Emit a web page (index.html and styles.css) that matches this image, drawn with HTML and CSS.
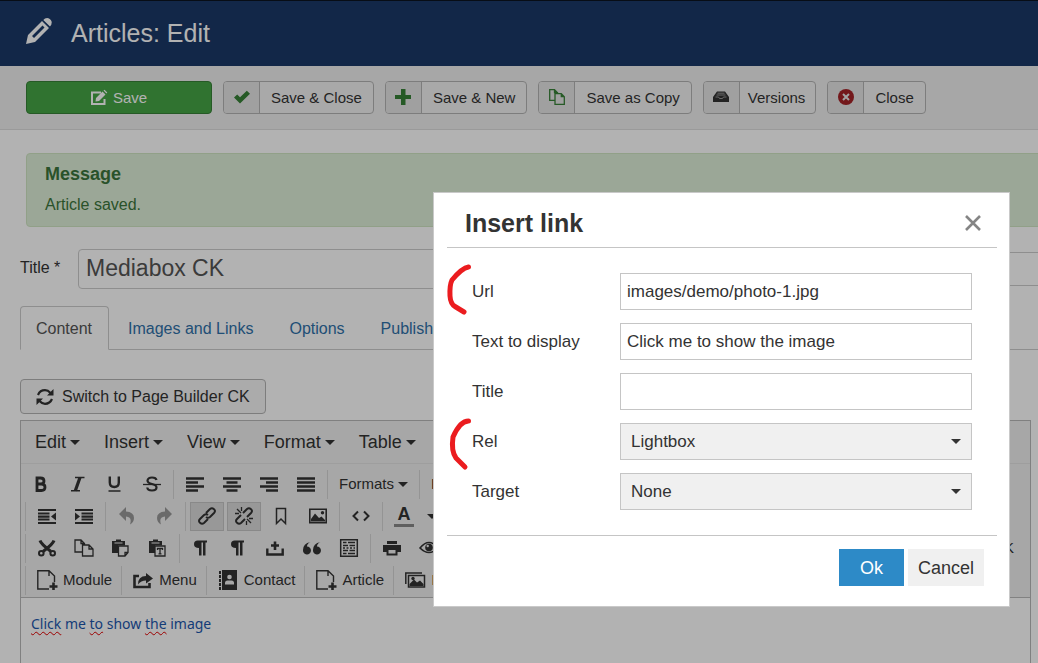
FILE: index.html
```html
<!DOCTYPE html>
<html lang="en">
<head>
<meta charset="utf-8">
<title>Articles: Edit</title>
<link rel="stylesheet" href="styles.css">
</head>
<body>
<div class="page">
  <header class="header">
    <svg class="header-icon" viewBox="0 0 26 26"><path fill="#fff" fill-rule="evenodd" d="M0 26 2 17 16 3 23 10 9 24ZM6 18 8 20 18.500 9.500 16.500 7.500ZM17.300 2 19 .5Q21.500-.8 23.800 1L25 2.300Q26.800 4.500 25.300 6.800L24 8.500Z"/></svg>
    <h1>Articles: Edit</h1>
  </header>

  <div class="actions">
    <button class="save"><svg class="i16" viewBox="0 0 16 16"><path fill="none" stroke="#fff" stroke-width="2" d="M10 2.500H1V14H13.500V9"/><path fill="#fff" d="M4.500 11.500 5 8 11.500 1.500 14.500 4.500 8 11ZM12.500.6 13.500-.3 16.300 2.500 15.400 3.500Z"/></svg>Save</button>
    <button class="action"><span class="action-icon"><svg class="i16" viewBox="0 0 16 16"><path fill="#378137" d="M0 8.500 3.200 5.500 6 8.200 12.800 1.800 16 4.700 6 14.500Z"/></svg></span><span class="action-text">Save &amp; Close</span></button>
    <button class="action"><span class="action-icon"><svg class="i16" viewBox="0 0 16 16"><path fill="#378137" d="M6 0H10.500V6H16V10H10.500V16H6V10H0V6H6Z"/></svg></span><span class="action-text">Save &amp; New</span></button>
    <button class="action"><span class="action-icon"><svg class="i16" viewBox="0 0 16 16"><path fill="none" stroke="#378137" stroke-width="1.300" d="M6 11.300H.7V.7H5.500L8.500 3.700M5.500.7V3.700H8.500V4.700H6V15.300H15.300V7.700L12.300 4.700H6M12.300 4.700V7.700H15.300"/></svg></span><span class="action-text">Save as Copy</span></button>
    <button class="action compact"><span class="action-icon"><svg class="i16" viewBox="0 0 16 16"><path fill="#333" d="M4 2.500H12L16 8V13H0V8Z"/><path stroke="#999" fill="none" d="M4.500 4.200H11.500M3.500 6H12.500M2.500 8H5.500L6.500 9.500H9.500L10.500 8H13.500"/></svg></span><span class="action-text">Versions</span></button>
    <button class="action"><span class="action-icon"><svg class="i16" viewBox="0 0 16 16"><circle cx="8" cy="8" r="8" fill="#a52328"/><path stroke="#e8e8e8" stroke-width="2" d="M5 5 11 11M11 5 5 11"/></svg></span><span class="action-text">Close</span></button>
  </div>

  <main class="content">
    <section class="alert">
      <h2>Message</h2>
      <p>Article saved.</p>
    </section>

    <div class="title-row">
      <label for="title">Title *</label>
      <input id="title" class="title-input" value="Mediabox CK">
      <input class="alias-input" aria-label="Alias">
    </div>

    <nav class="tabs">
      <a class="tab active" href="#content">Content</a>
      <a class="tab" href="#images">Images and Links</a>
      <a class="tab" href="#options">Options</a>
      <a class="tab" href="#publishing">Publishing</a>
    </nav>

    <button class="switch"><svg class="i18" viewBox="0 0 18 18"><path fill="none" stroke="#333" stroke-width="2.200" d="M2 7Q4 2.200 9 2.200 12 2.200 14.500 5M16 11Q14 15.800 9 15.800 6 15.800 3.500 13"/><path fill="#333" d="M17.500 1V7.500H11ZM.5 17V10.500H7Z"/></svg>Switch to Page Builder CK</button>

    <div class="editor">
      <div class="menubar">
        <button>Edit</button><button>Insert</button><button>View</button><button>Format</button><button>Table</button>
      </div>
      <div class="tools">
        <div class="row">
          <button class="tool" aria-label="Bold"><svg viewBox="0 0 20 20"><path fill="none" stroke="#333" stroke-width="2.800" d="M6 4H9.500Q13 4 13 7T9.500 10H6M6 10H10.500Q14 10 14 13.200T10.500 16.500H6V2.600"/></svg></button>
          <button class="tool" aria-label="Italic"><svg viewBox="0 0 20 20"><path fill="none" stroke="#333" stroke-width="1.600" d="M7 3.500H16.500M3 16.800H12"/><path stroke="#333" stroke-width="3.200" d="M12 3.500 7.300 16.800"/></svg></button>
          <button class="tool" aria-label="Underline"><svg viewBox="0 0 20 20"><path fill="none" stroke="#333" stroke-width="2.400" d="M4.800 2.500V8.500Q4.800 13 9.300 13T13.800 8.500V2.500"/><path stroke="#333" stroke-width="1.500" d="M3.500 17H15.500"/></svg></button>
          <button class="tool" aria-label="Strikethrough"><svg viewBox="0 0 20 20"><path fill="none" stroke="#333" stroke-width="2.200" d="M14.500 6Q14 3.500 10 3.500T5.500 6.500Q5.500 9 10 10T14.500 13.500Q14.500 16.500 10 16.500T5.300 13.500"/><path stroke="#333" stroke-width="1.300" d="M1 10.500H19"/></svg></button>
          <i class="sep"></i>
          <button class="tool" aria-label="Align left"><svg viewBox="0 0 20 20"><path stroke="#333" stroke-width="2.500" d="M1 4.500H19M1 8.500H13M1 12.500H19M1 16.500H13"/></svg></button>
          <button class="tool" aria-label="Align center"><svg viewBox="0 0 20 20"><path stroke="#333" stroke-width="2.500" d="M1 4.500H19M4.500 8.500H15.500M1 12.500H19M4.500 16.500H15.500"/></svg></button>
          <button class="tool" aria-label="Align right"><svg viewBox="0 0 20 20"><path stroke="#333" stroke-width="2.500" d="M1 4.500H19M7 8.500H19M1 12.500H19M7 16.500H19"/></svg></button>
          <button class="tool" aria-label="Justify"><svg viewBox="0 0 20 20"><path stroke="#333" stroke-width="2.500" d="M1 4.500H19M1 8.500H19M1 12.500H19M1 16.500H19"/></svg></button>
          <i class="sep"></i>
          <button class="drop">Formats</button>
          <i class="sep"></i>
          <button class="drop">Font</button>
        </div>
        <div class="row">
          <i class="sep"></i>
          <button class="tool" aria-label="Decrease indent"><svg viewBox="0 0 20 20"><path stroke="#333" stroke-width="2.200" d="M1 4H19M1 7.500H12.500M1 10.700H12.500M1 13.500H12.500M1 17H19"/><path fill="#333" d="M19 6.500V14.500L14 10.500Z"/></svg></button>
          <button class="tool" aria-label="Increase indent"><svg viewBox="0 0 20 20"><path stroke="#333" stroke-width="2.200" d="M1 4H19M7.500 7.500H19M7.500 10.700H19M7.500 13.500H19M1 17H19"/><path fill="#333" d="M1 6.500V14.500L6 10.500Z"/></svg></button>
          <i class="sep"></i>
          <button class="tool" aria-label="Undo"><svg viewBox="0 0 20 20"><path fill="#999" d="M9 1V5.500Q17 6 17 12 17 16 13 18.500 15.500 11 9 10.500V15L2 8Z"/></svg></button>
          <button class="tool" aria-label="Redo"><svg viewBox="0 0 20 20"><path fill="#999" d="M11 1V5.500Q3 6 3 12 3 16 7 18.500 4.500 11 11 10.500V15L18 8Z"/></svg></button>
          <i class="sep"></i>
          <button class="tool on" aria-label="Insert link"><svg viewBox="0 0 20 20"><g fill="none" stroke="#333" stroke-width="2"><path d="M9 7 13 3Q15 1.500 17 3.200T17 7L13 11Q11 12.500 9 11M11 13 7 17Q5 18.500 3 16.800T3 13L7 9Q9 7.500 11 9"/></g></svg></button>
          <button class="tool on" aria-label="Remove link"><svg viewBox="0 0 20 20"><g fill="none" stroke="#333" stroke-width="2"><path d="M9 7 13 3Q15 1.500 17 3.200T17 7L13 11M11 13 7 17Q5 18.500 3 16.800T3 13L7 9"/></g><path stroke="#333" stroke-width="1.300" d="M3 3 7 7M7.500 1V5M1 7.500H5M17 17 13 13M12.500 19V15M19 12.500H15"/></svg></button>
          <button class="tool" aria-label="Anchor"><svg viewBox="0 0 20 20"><path fill="none" stroke="#333" stroke-width="1.500" d="M5.500 2.500H14.500V17.500L10 13 5.500 17.500Z"/></svg></button>
          <button class="tool" aria-label="Image"><svg viewBox="0 0 20 20"><path fill="none" stroke="#333" stroke-width="1.600" d="M1.800 3.300H18.200V16.700H1.800Z"/><path fill="#333" d="M3 15V13L7 7.500 11 12 13.500 10.500 17 14V15.500H3Z"/><circle cx="14.500" cy="6.700" r="1.700" fill="#333"/></svg></button>
          <i class="sep"></i>
          <button class="tool" aria-label="Source code"><svg viewBox="0 0 20 20"><path fill="none" stroke="#333" stroke-width="2" d="M7 5.500 2.500 10 7 14.500M13 5.500 17.500 10 13 14.500"/></svg></button>
          <i class="sep"></i>
          <button class="color-tool"><span>A</span></button>
        </div>
        <div class="row">
          <i class="sep"></i>
          <button class="tool" aria-label="Cut"><svg viewBox="0 0 20 20"><g fill="none" stroke="#333"><path stroke-width="3" d="M3 2.500Q4 6 14 13.500M17 2.500Q16 6 6 13.500"/><circle cx="4.300" cy="15.300" r="2.300" stroke-width="2"/><circle cx="15.700" cy="15.300" r="2.300" stroke-width="2"/></g></svg></button>
          <button class="tool" aria-label="Copy"><svg viewBox="0 0 20 20"><path fill="none" stroke="#333" stroke-width="1.300" d="M8 14H1V2H7L10.500 5.500V7M7 2V5.500H10.500M8.500 7H15L19 11V18H8.500ZM15 7V11H19"/></svg></button>
          <button class="tool" aria-label="Paste"><svg viewBox="0 0 20 20"><path fill="#333" d="M1 3H5V1.500H10V3H14V7.500H7V15H1Z"/><path stroke="#f0f0f0" d="M3.500 5H11.500"/><path fill="#f0f0f0" stroke="#333" stroke-width="1.300" d="M7.500 8H17V14.500L14 18H7.500ZM17 14.500H14V18"/></svg></button>
          <button class="tool" aria-label="Paste as text"><svg viewBox="0 0 20 20"><path fill="#333" d="M1 3H5V1.500H10V3H14V7.500H7V15H1Z"/><path stroke="#f0f0f0" d="M3.500 5H11.500"/><path fill="#f0f0f0" stroke="#333" stroke-width="1.300" d="M7 8H17V18H7Z"/><path fill="none" stroke="#333" stroke-width="1.300" d="M9.500 12V10.500H14.500V12M12 10.500V15.800M10.500 15.800H13.500"/></svg></button>
          <i class="sep"></i>
          <button class="tool" aria-label="Left to right"><svg viewBox="0 0 20 20"><path fill="#333" d="M7 2.500H16V4.500H14.500V17.500H12V4.500H10.500V17.500H8V10Q3 10 3 6.200T7 2.500Z"/></svg></button>
          <button class="tool" aria-label="Right to left"><svg viewBox="0 0 20 20"><path fill="#333" d="M7 2.500H16V4.500H14.500V17.500H12V4.500H10.500V17.500H8V10Q3 10 3 6.200T7 2.500Z"/></svg></button>
          <button class="tool" aria-label="Insert template"><svg viewBox="0 0 20 20"><path fill="none" stroke="#333" stroke-width="2.400" d="M2.300 10.500V16.500H17.700V10.500"/><path stroke="#333" stroke-width="2.600" d="M10 3.500V12M6 7.500H14"/></svg></button>
          <button class="tool" aria-label="Blockquote"><svg viewBox="0 0 20 20"><path fill="#333" d="M8.500 4Q5 5.500 5 8.500A4 4 0 1 1 1 12Q1 5.500 8.500 4ZM18.500 4Q15 5.500 15 8.500A4 4 0 1 1 11 12Q11 5.500 18.500 4Z"/></svg></button>
          <button class="tool" aria-label="Page break"><svg viewBox="0 0 20 20"><path fill="none" stroke="#333" stroke-width="1.500" d="M1.700 1.700H18.300V18.300H1.700Z"/><path fill="none" stroke="#333" stroke-width="1.300" d="M4 4.500H7.500M9 4.500H16M4 7.500H9M10.500 7.500H16M4 12.500H9M10.500 12.500H16M4 15.500H7.500M9 15.500H16M4 10H6M7.500 10H9.500M11 10H13M14.500 10H16"/></svg></button>
          <i class="sep"></i>
          <button class="tool" aria-label="Print"><svg viewBox="0 0 20 20"><path fill="#333" fill-rule="evenodd" d="M5 3H15V6H5ZM1 7H19V14H15.500V17.500H4.500V14H1ZM6.500 12V15.500H13.500V12Z"/></svg></button>
          <button class="tool" aria-label="Preview"><svg viewBox="0 0 20 20"><path fill="none" stroke="#333" stroke-width="1.600" d="M1 10Q10-1 19 10 10 19 1 10Z"/><circle cx="10" cy="9.500" r="3.800" fill="#333"/><circle cx="8.700" cy="8" r="1.200" fill="#f0f0f0"/></svg></button>
          <button class="row-end">CK</button>
        </div>
        <div class="row">
          <i class="sep"></i>
          <button class="labeled"><svg viewBox="0 0 20 20"><path fill="none" stroke="#333" stroke-width="1.400" d="M12 19H.8V.8H12L17.500 6V12M12 .8V6"/><path stroke="#333" stroke-width="2.600" d="M12.500 16.500H20.500M16.500 12.500V20"/></svg>Module</button>
          <i class="sep"></i>
          <button class="labeled"><svg viewBox="0 0 20 20"><path fill="none" stroke="#333" stroke-width="2.600" d="M6 6H1.500V17H16.500V13"/><path fill="#333" d="M13 3 20 8.500 13 13.500V10.500Q8 10.500 5 14.500 5 6 13 6Z"/></svg>Menu</button>
          <i class="sep"></i>
          <button class="labeled"><svg viewBox="0 0 20 20"><path fill="#333" d="M4 0H19V20H4ZM1 1H3V4H1ZM1 5H3V8H1ZM1 9H3V12H1ZM1 13H3V16H1ZM1 17H3V20H1Z"/><circle cx="11.500" cy="7" r="2.300" fill="#f0f0f0"/><path fill="#f0f0f0" d="M7 14.500V13Q7 10.500 9.500 10.500H13.500Q16 10.500 16 13V14.500Z"/></svg>Contact</button>
          <i class="sep"></i>
          <button class="labeled"><svg viewBox="0 0 20 20"><path fill="none" stroke="#333" stroke-width="1.400" d="M12 19H.8V.8H12L17.500 6V12M12 .8V6"/><path stroke="#333" stroke-width="2.600" d="M12.500 16.500H20.500M16.500 12.500V20"/></svg>Article</button>
          <i class="sep"></i>
          <button class="labeled"><svg viewBox="0 0 20 20"><path fill="none" stroke="#333" stroke-width="1.500" d="M.8 14V3H17M3.500 5.500H19.500V17H3.500Z"/><path fill="#333" d="M4.500 16V14L9 9.500 12 12.500 15 10.500 18.500 14V16Z"/><circle cx="8" cy="8.500" r="1.700" fill="#333"/></svg>Image</button>
        </div>
      </div>
      <div class="document">
        <a href="#image"><span class="typo">Click</span> me <span class="typo">to</span> show <span class="typo">the</span> image</a>
      </div>
    </div>
  </main>
</div>

<div class="overlay"></div>

<form class="dialog" role="dialog" aria-labelledby="dialog-title">
  <div class="dialog-head">
    <h2 id="dialog-title">Insert link</h2>
    <button type="button" class="close" aria-label="Close"><svg class="i16" viewBox="0 0 16 16"><path stroke="#858585" stroke-width="2.600" d="M1 1 15 15M15 1 1 15"/></svg></button>
  </div>
  <div class="dialog-body">
    <label for="url">Url</label><input id="url" value="images/demo/photo-1.jpg">
    <label for="text">Text to display</label><input id="text" value="Click me to show the image">
    <label for="link-title">Title</label><input id="link-title">
    <label for="rel">Rel</label><div class="select"><select id="rel"><option>Lightbox</option></select></div>
    <label for="target">Target</label><div class="select"><select id="target"><option>None</option></select></div>
  </div>
  <div class="dialog-foot">
    <button type="button" class="ok">Ok</button>
    <button type="button" class="cancel">Cancel</button>
  </div>
  <svg class="mark" viewBox="0 0 26 206"><path d="M21.500 4Q15 5 5 17 2.500 22 3 33 3.500 41 8 43.500L17 49M21.500 158Q13 158 6 174 4 188 9 195L18 204"/></svg>
</form>
</body>
</html>
```

FILE: styles.css
```css
* { box-sizing: border-box; }
html, body { height: 100%; margin: 0; }
body { font: 16px/20px "Liberation Sans", Arial, sans-serif; color: #333; overflow: hidden; }
h1, h2, p { margin: 0; }
button, input, select { font: inherit; color: inherit; margin: 0; }
button { padding: 0; border: 0; background: none; white-space: nowrap; }
svg { display: block; flex: none; overflow: visible; }
.i16 { width: 16px; height: 16px; }
.i18 { width: 18px; height: 18px; }

.page { min-height: 100%; display: flex; flex-direction: column; background: #fff; overflow: hidden; }

.header { height: 66px; display: flex; align-items: center; gap: 19px; padding: 0 26px 2px; background: #1a3867; border-top: 1px solid #0b1420; color: #fff; }
.header-icon { width: 26px; height: 26px; margin-top: -3px; }
.header h1 { font-size: 25px; line-height: 30px; font-weight: 400; }

.actions { display: flex; gap: 11px; padding: 15px 26px; background: #f0f0f0; border-bottom: 1px solid #ddd; font-size: 15px; }
.save { width: 186px; height: 33px; display: flex; align-items: center; justify-content: center; gap: 6px; border: 1px solid #378137; border-radius: 4px; background: #46a546; color: #fff; }
.action { height: 33px; display: flex; border: 1px solid #b3b3b3; border-radius: 4px; background: #f3f3f3; overflow: hidden; }
.action-icon { width: 36px; height: 100%; display: flex; align-items: center; justify-content: center; padding-bottom: 2px; background: #e6e6e6; border-right: 1px solid #b3b3b3; }
.action-text { padding: 0 11px; line-height: 31px; }
.compact .action-text { padding: 0 10px 0 8px; }

.content { flex: 1; display: flex; flex-direction: column; padding: 23px 7px 0 20px; }
.alert { margin: 0 -12px 0 6px; padding: 9px 18px 11px; background: #dff0d8; border: 1px solid #d0e5c3; border-radius: 4px; color: #3c763d; }
.alert h2 { font-size: 18px; line-height: 22px; }
.alert p { margin-top: 9px; line-height: 21px; }

.title-row { display: flex; align-items: center; margin: 22px -12px 0 0; }
.title-row label { width: 58px; padding-bottom: 3px; }
.title-row input { border: 1px solid #ccc; border-radius: 4px; background: #fff; }
.title-input { width: 560px; height: 40px; padding: 0 7px 2px; font-size: 23px; color: #555; }
.alias-input { flex: 1; height: 34px; margin-left: 80px; }

.tabs { display: flex; margin: 17px -12px 0 0; border-bottom: 1px solid #ccc; }
.tab { height: 43px; margin-right: 3px; padding: 1px 17px 0 16px; line-height: 44px; color: #3071a9; text-decoration: none; }
.tab.active { height: 44px; margin-bottom: -1px; padding: 0 16px 0 15px; border: 1px solid #ccc; border-bottom-color: #fff; border-radius: 4px 4px 0 0; background: #fff; color: #555; }

.switch { align-self: flex-start; height: 35px; display: flex; align-items: center; gap: 8px; margin: 29px 0 6px; padding: 0 15px; border: 1px solid #b3b3b3; border-radius: 4px; background: #f5f5f5; }

.editor { flex: 1; display: flex; flex-direction: column; min-height: 243px; border: 1px solid #b8b8b8; border-bottom: 0; }
.menubar { height: 43px; display: flex; gap: 24px; padding: 0 14px; background: #f0f0f0; border-bottom: 1px solid #e2e2e2; font-size: 18px; }
.menubar button, .drop { display: flex; align-items: center; gap: 4px; }
.menubar button::after, .drop::after { content: ""; border: 5px solid transparent; border-top-color: #333; border-bottom: 0; }
.tools { padding: 4px 0 1px 1px; background: #f0f0f0; border-bottom: 1px solid #bbb; font-size: 15px; }
.row { height: 32px; display: flex; align-items: center; overflow: hidden; }
.sep { flex: none; width: 1px; height: 29px; margin: 0 2px 0 3px; background: #d5d5d5; }
.tool { flex: none; width: 37px; height: 29px; display: flex; align-items: center; justify-content: center; }
.tool svg { width: 20px; height: 20px; }
.tool.on { width: 34px; margin: 0 1px 0 2px; background: #dadada; border: 1px solid #c4c4c4; }
.drop { padding: 0 8px 0 9px; }
.color-tool { display: flex; align-items: center; gap: 13px; padding-left: 9px; font-size: 18px; font-weight: 700; }
.color-tool span { width: 20px; line-height: 19px; border-bottom: 3px solid #888; }
.color-tool::after { content: ""; border: 5px solid transparent; border-top-color: #333; border-bottom: 0; }
.row-end { margin-left: auto; padding-right: 16px; }
.labeled { display: flex; align-items: center; gap: 6px; padding: 0 6px 0 9px; }
.labeled svg { width: 20px; height: 20px; }
.document { flex: 1; padding: 15px 10px; font: 14px/22px "Noto Sans", sans-serif; }
.document a { color: #1c57ad; text-decoration: none; }
.typo { text-decoration: underline wavy #e00000 1px; text-underline-offset: 2px; text-decoration-skip-ink: none; }

.overlay { position: fixed; inset: 0; background: rgba(0, 0, 0, .3); }

.dialog { position: fixed; top: 192px; right: 28px; width: 577px; padding: 0 12px 0 13px; background: #fff; border: 1px solid #c9c9c9; font-size: 17px; }
.dialog-head { height: 55px; display: flex; align-items: center; justify-content: space-between; padding: 6px 16px 0 18px; border-bottom: 1px solid #c5c5c5; }
.dialog-head h2 { font-size: 25px; line-height: 30px; }
.dialog-body { display: grid; grid-template-columns: 148px 1fr; row-gap: 13px; align-items: center; padding: 25px; }
.dialog-body input, .dialog-body select { width: 100%; height: 37px; border: 1px solid #c5c5c5; border-radius: 0; background: #fff; outline: 0; display: block; }
.dialog-body input { padding: 0 6px; }
.dialog-body select { appearance: none; padding: 0 10px; background: #f0f0f0; }
.select { position: relative; }
.select::after { content: ""; position: absolute; right: 11px; top: 16px; border: 5px solid transparent; border-top-color: #333; border-bottom: 0; pointer-events: none; }
.dialog-foot { display: flex; justify-content: flex-end; gap: 4px; padding: 13px 13px 20px; border-top: 1px solid #c5c5c5; font-size: 18px; }
.ok, .cancel { height: 37px; }
.ok { width: 65px; background: #2d8ac7; color: #fff; }
.cancel { width: 76px; background: #f0f0f0; }
.mark { position: absolute; width: 26px; height: 206px; left: 13px; top: 70px; fill: none; stroke: #eb1c1f; stroke-width: 5; stroke-linecap: round; stroke-linejoin: round; }
```
